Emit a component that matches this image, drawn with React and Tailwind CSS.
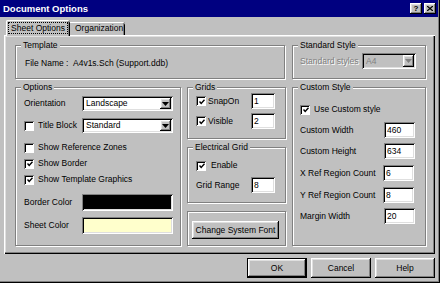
const raised = "shadow-[inset_-1px_-1px_#000,inset_1px_1px_#fff,inset_-2px_-2px_#808080,inset_2px_2px_#dfdfdf]";
const sunken = "shadow-[inset_1px_1px_#808080,inset_-1px_-1px_#fff,inset_2px_2px_#000,inset_-2px_-2px_#dfdfdf]";

function Arrow({ gray }) {
  return (
    <svg width="7" height="4" viewBox="0 0 7 4">
      <path d="M0 0h7L3.5 4z" fill={gray ? "#808080" : "#000"} />
    </svg>
  );
}

function Combo({ value, className, disabled }) {
  return (
    <div className={"flex p-[2px] " + sunken + " " + (disabled ? "bg-[#c0c0c0] " : "bg-white ") + className}>
      <span className={"flex-1 pl-[2px] flex items-center " + (disabled ? "text-[#808080]" : "")}>{value}</span>
      <span className={"w-[11px] flex items-center justify-center bg-[#c0c0c0] " + raised}>
        <Arrow gray={disabled} />
      </span>
    </div>
  );
}

function Check({ checked }) {
  return (
    <span className="w-[10px] h-[10px] shrink-0 bg-white flex items-center justify-center shadow-[inset_1px_1px_#808080,inset_-1px_-1px_#fff,inset_2px_2px_#000]">
      {checked && (
        <svg width="6" height="6" viewBox="0 0 6 6" className="ml-[1px] mt-[1px]">
          <path d="M0.5 2.5L2.2 4.5L5.5 0.8" stroke="#000" strokeWidth="1.4" fill="none" />
        </svg>
      )}
    </span>
  );
}

function Field({ value, className }) {
  return (
    <div className={"h-[16px] bg-white pl-[3px] flex items-center " + sunken + " " + className}>{value}</div>
  );
}

function Group({ title, className, children }) {
  return (
    <div className={"border border-[#808080] shadow-[inset_1px_1px_#fff,1px_1px_#fff] " + className}>
      {title && (
        <div className="-mt-[6px] ml-[5px] px-[2px] w-fit h-[11px] leading-[11px] bg-[#c0c0c0]">{title}</div>
      )}
      {children}
    </div>
  );
}

function Btn({ children, className }) {
  return (
    <div className={"flex items-center justify-center bg-[#c0c0c0] " + raised + " " + className}>{children}</div>
  );
}

export default function App() {
  return (
    <div className="w-[440px] h-[283px] overflow-hidden whitespace-nowrap bg-[#c0c0c0] text-black text-[8.5px] leading-none font-['Liberation_Sans',Arial,sans-serif] shadow-[inset_-1px_-1px_#000,inset_-2px_-2px_#808080]">

      {/* title bar */}
      <div className="w-[438px] h-[17px] bg-[#000080] flex items-center justify-between pl-[3px] pr-[2px]">
        <span className="text-white font-bold text-[9.5px]">Document Options</span>
        <div className="flex gap-[2px]">
          <Btn className="w-[12px] h-[11px] font-bold text-[8px]">?</Btn>
          <Btn className="w-[12px] h-[11px]">
            <svg width="6" height="5" viewBox="0 0 6 5">
              <path d="M0 0L6 5M6 0L0 5" stroke="#000" strokeWidth="1.3" />
            </svg>
          </Btn>
        </div>
      </div>

      {/* tabs */}
      <div className="flex items-end h-[15px] mt-[3px] pl-[6px]">
        <div className="relative z-10 -mb-px h-[16px] w-[64px] bg-[#c0c0c0] rounded-t-[2px] flex items-center justify-center shadow-[inset_1px_0_#fff,inset_0_1px_#fff,inset_-1px_0_#000,inset_-2px_0_#808080]">
          <span className="outline-1 outline-dotted outline-black px-[2px] py-[1px]">Sheet Options</span>
        </div>
        <div className="h-[13px] w-[55px] flex items-center pl-[5px] rounded-tr-[2px] shadow-[inset_0_1px_#fff,inset_-1px_0_#000,inset_-2px_0_#808080]">
          Organization
        </div>
      </div>

      {/* panel */}
      <div className="ml-[4px] w-[431px] h-[219px] flex gap-[6px] pl-[11px] pt-[10px] shadow-[inset_1px_1px_#fff,inset_-1px_-1px_#000,inset_-2px_-2px_#808080,inset_2px_2px_#dfdfdf]">

        <div className="w-[271px] flex flex-col gap-[8px]">
          <Group title="Template" className="h-[34px] w-[270px]">
            <div className="flex items-center h-[13px] mt-[6px] pl-[9px]">
              <span className="w-[48px]">File Name :</span>
              <span>A4v1s.Sch (Support.ddb)</span>
            </div>
          </Group>

          <div className="flex gap-[6px]">
            <Group title="Options" className="w-[166px] h-[159px]">
              <div className="flex items-center h-[15px] mt-[3px] pl-[8px]">
                <span className="w-[58px]">Orientation</span>
                <Combo value="Landscape" className="w-[91px] h-[15px]" />
              </div>
              <div className="flex items-center h-[15px] mt-[7px] pl-[8px]">
                <div className="w-[58px] flex items-center gap-[4px]">
                  <Check />
                  <span>Title Block</span>
                </div>
                <Combo value="Standard" className="w-[91px] h-[15px]" />
              </div>
              <div className="flex items-center gap-[4px] h-[15px] mt-[7px] pl-[8px]">
                <Check />
                <span>Show Reference Zones</span>
              </div>
              <div className="flex items-center gap-[4px] h-[15px] mt-[1px] pl-[8px]">
                <Check checked />
                <span>Show Border</span>
              </div>
              <div className="flex items-center gap-[4px] h-[15px] mt-[1px] pl-[8px]">
                <Check checked />
                <span>Show Template Graphics</span>
              </div>
              <div className="flex items-center h-[17px] mt-[7px] pl-[8px]">
                <span className="w-[58px]">Border Color</span>
                <div className={"w-[91px] h-[17px] bg-black " + sunken}></div>
              </div>
              <div className="flex items-center h-[17px] mt-[6px] pl-[8px]">
                <span className="w-[58px]">Sheet Color</span>
                <div className={"w-[91px] h-[17px] bg-[#ffffcc] " + sunken}></div>
              </div>
            </Group>

            <div className="w-[99px] flex flex-col">
              <Group title="Grids" className="h-[52px]">
                <div className="flex items-center h-[16px] pl-[8px]">
                  <div className="w-[55px] flex items-center gap-[2px]">
                    <Check checked />
                    <span>SnapOn</span>
                  </div>
                  <Field value="1" className="w-[24px]" />
                </div>
                <div className="flex items-center h-[16px] mt-[4px] pl-[8px]">
                  <div className="w-[55px] flex items-center gap-[2px]">
                    <Check checked />
                    <span>Visible</span>
                  </div>
                  <Field value="2" className="w-[24px]" />
                </div>
              </Group>

              <Group title="Electrical Grid" className="h-[56px] mt-[8px]">
                <div className="flex items-center gap-[5px] h-[15px] mt-[5px] pl-[8px]">
                  <Check checked />
                  <span>Enable</span>
                </div>
                <div className="flex items-center h-[16px] mt-[4px] pl-[8px]">
                  <span className="w-[55px]">Grid Range</span>
                  <Field value="8" className="w-[24px]" />
                </div>
              </Group>

              <Group className="h-[35px] mt-[8px]">
                <Btn className="w-[87px] h-[18px] mt-[9px] ml-[4px]">Change System Font</Btn>
              </Group>
            </div>
          </div>
        </div>

        <div className="w-[134px] flex flex-col gap-[8px]">
          <Group title="Standard Style" className="h-[34px]">
            <div className="flex items-center h-[16px] mt-[2px] pl-[7px]">
              <span className="w-[62px] text-[#808080] [text-shadow:1px_1px_0_#fff]">Standard styles</span>
              <Combo value="A4" disabled className="w-[54px] h-[16px]" />
            </div>
          </Group>

          <Group title="Custom Style" className="h-[159px]">
            <div className="flex items-center gap-[4px] h-[15px] mt-[9px] pl-[7px]">
              <Check checked />
              <span>Use Custom style</span>
            </div>
            <div className="flex items-center h-[16px] mt-[5px] pl-[7px]">
              <span className="w-[84px]">Custom Width</span>
              <Field value="460" className="w-[31px]" />
            </div>
            <div className="flex items-center h-[16px] mt-[5px] pl-[7px]">
              <span className="w-[84px]">Custom Height</span>
              <Field value="634" className="w-[31px]" />
            </div>
            <div className="flex items-center h-[16px] mt-[6px] pl-[7px]">
              <span className="w-[83px]">X Ref Region Count</span>
              <Field value="6" className="w-[31px]" />
            </div>
            <div className="flex items-center h-[16px] mt-[6px] pl-[7px]">
              <span className="w-[83px]">Y Ref Region Count</span>
              <Field value="8" className="w-[31px]" />
            </div>
            <div className="flex items-center h-[16px] mt-[5px] pl-[7px]">
              <span className="w-[84px]">Margin Width</span>
              <Field value="20" className="w-[31px]" />
            </div>
          </Group>
        </div>
      </div>

      {/* buttons */}
      <div className="flex justify-end gap-[4px] mt-[4px] pr-[5px]">
        <Btn className="w-[60px] h-[20px] border border-black">OK</Btn>
        <Btn className="w-[60px] h-[20px]">Cancel</Btn>
        <Btn className="w-[60px] h-[20px]">Help</Btn>
      </div>
    </div>
  );
}
